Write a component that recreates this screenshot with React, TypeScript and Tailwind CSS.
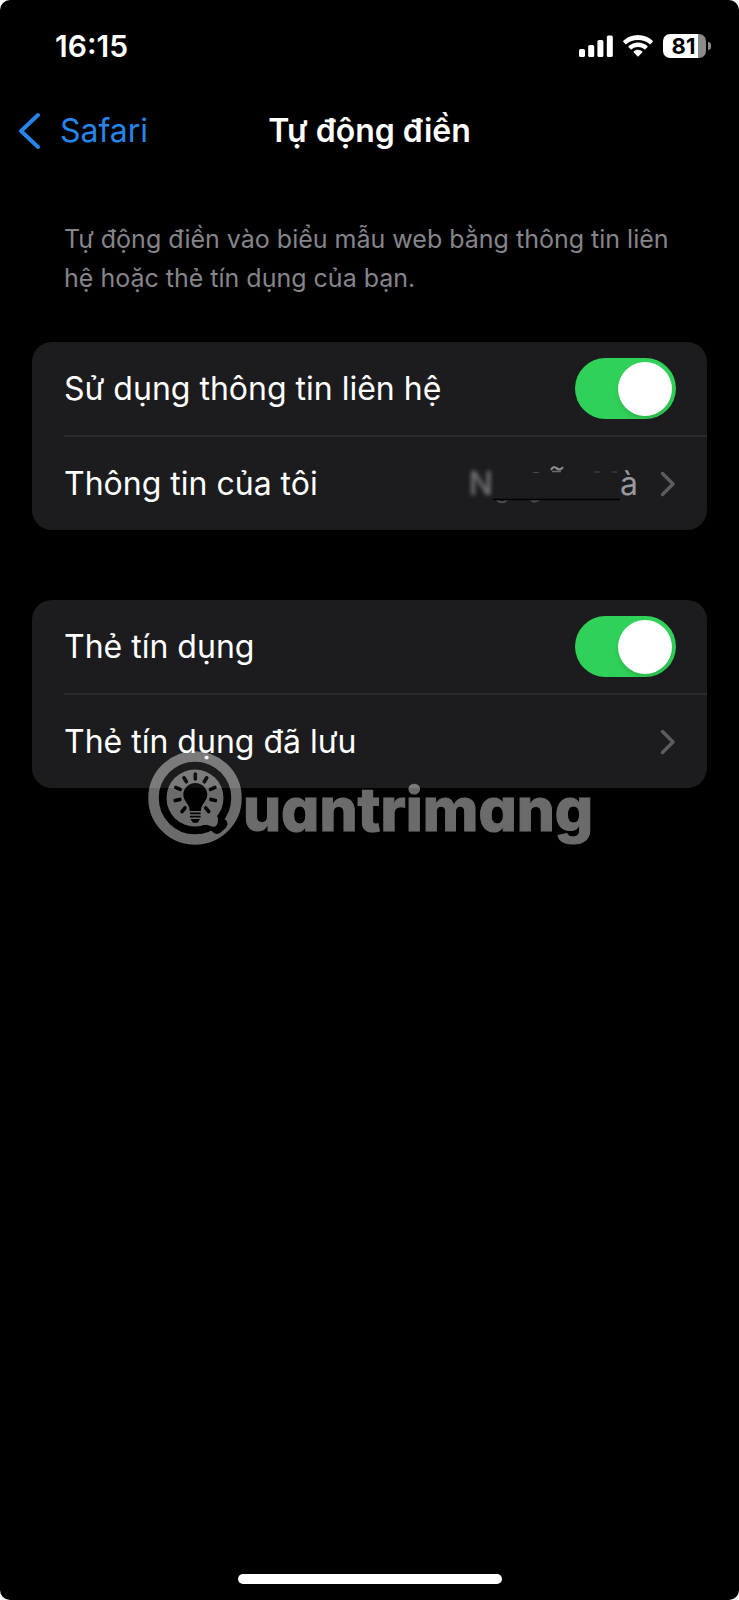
import { useState } from 'react';

interface ToggleRowProps {
    id: string;
    label: string;
    defaultOn?: boolean;
}

function ToggleRow({ id, label, defaultOn = true }: ToggleRowProps) {
    const [on, setOn] = useState(defaultOn);

    return (
        <div className="flex h-[93px] items-center justify-between pr-[31px]">
            <label htmlFor={id}>{label}</label>
            <input
                id={id}
                type="checkbox"
                role="switch"
                checked={on}
                onChange={(e) => setOn(e.target.checked)}
                className="flex h-[61px] w-[101px] shrink-0 cursor-pointer appearance-none items-center rounded-full bg-[#39393d] p-1 transition-colors before:size-[54px] before:rounded-full before:bg-white before:shadow-md before:content-[''] checked:justify-end checked:bg-[#30d158]"
            />
        </div>
    );
}

function Chevron() {
    return (
        <svg viewBox="0 0 16 26" className="h-[26px] w-4 shrink-0" fill="none" aria-hidden="true">
            <path d="M2.5 2.5 13 13 2.5 23.5" stroke="#5c5c60" strokeWidth="3.4" strokeLinecap="round" strokeLinejoin="round" />
        </svg>
    );
}

function StatusBar() {
    return (
        <header className="flex h-[92px] items-center justify-between pr-7 pl-[55px]">
            <time className="text-[30px] leading-9 font-semibold">16:15</time>
            <div className="flex items-center gap-[10px]">
                {/* Signal */}
                <svg viewBox="0 0 34 22" className="h-[22px] w-[34px]" fill="#fff" aria-hidden="true">
                    <rect x="0" y="14" width="6" height="8" rx="1.6" />
                    <rect x="9.2" y="10" width="6" height="12" rx="1.6" />
                    <rect x="18.4" y="5" width="6" height="17" rx="1.6" />
                    <rect x="27.8" y="0.5" width="6" height="21.5" rx="1.6" />
                </svg>
                {/* Wi-Fi */}
                <svg viewBox="0 0 30 22" className="h-[22px] w-[30px]" fill="#fff" aria-hidden="true">
                    <path d="M15 0C9.3 0 4.1 2.200.4 5.800a.8.8 0 0 0 0 1.100l2 2.100a.8.8 0 0 0 1.100 0C6.500 6 10.600 4.900 15 4.900S23.500 6 26.500 9a.8.8 0 0 0 1.100 0l2-2.100a.8.8 0 0 0 0-1.100C25.900 2.200 20.700 0 15 0Z" />
                    <path d="M15 7.400c-3.600 0-6.900 1.400-9.400 3.700a.8.8 0 0 0 0 1.100l2.100 2.100c.3.300.8.300 1.100 0 1.600-1.500 3.800-2.200 6.200-2.200s4.600.7 6.200 2.200c.3.300.8.300 1.100 0l2.100-2.100a.8.8 0 0 0 0-1.100A13.700 13.700 0 0 0 15 7.400Z" />
                    <path d="M15 14.700c-1.600 0-3.100.6-4.200 1.600a.8.8 0 0 0 0 1.100l3.600 3.900c.3.400.9.400 1.200 0l3.600-3.900a.8.8 0 0 0 0-1.100 6.200 6.200 0 0 0-4.200-1.600Z" />
                </svg>
                {/* Battery */}
                <div className="flex items-center gap-[2px]">
                    <div className="flex h-6 w-[43px] items-center justify-center overflow-hidden rounded-[7px] bg-linear-to-r from-white from-81% to-[#8b8b8b] to-81% pr-[2px] text-[22px] leading-6 font-bold text-black">
                        81
                    </div>
                    <div className="h-2 w-[3px] rounded-r-full bg-[#8b8b8b]" />
                </div>
            </div>
        </header>
    );
}

// Contact name with its middle part painted over
function RedactedName() {
    return (
        <span className="flex items-center text-[#98989f]">
            <span className="font-medium text-[#76767b] blur-[2px]">N</span>
            <svg viewBox="0 0 127 42" className="h-[42px] w-[127px]" fill="none" aria-hidden="true">
                <path d="M58 7c2-4 4-3 6-1.500s4 1.500 6-1.500" stroke="#8a8a8f" strokeWidth="2.200" />
                <path d="M59 8.500h9" stroke="#6b6b70" strokeWidth="1.500" />
                <path d="M40 9.500h6M101 9h6M119 9h5" stroke="#48484c" strokeWidth="1" />
                <path d="M4 37c3 3 7 3 10 0M38 37c2 2 5 2 8 0" stroke="#4b4b50" strokeWidth="2" />
                <path d="M0 36.500h127" stroke="#000" strokeWidth="1.500" />
            </svg>
            à
        </span>
    );
}

function Watermark() {
    return (
        <div className="pointer-events-none absolute bottom-0 left-[115px] flex translate-y-[58px] items-center opacity-42">
            <svg viewBox="0 0 96 96" className="size-24" aria-hidden="true">
                <circle cx="48" cy="48" r="41.500" fill="none" stroke="#fff" strokeWidth="10.500" />
                {/* Speech-bubble tail */}
                <path d="M63 72 70 78.500 75 74" fill="none" stroke="#000" strokeWidth="11" strokeLinecap="round" strokeLinejoin="round" />
                <circle cx="48" cy="48" r="28.500" fill="#fff" />
                <path d="M60 60 67.500 66c3.500 2 1.500 4 1.800 5.500s-1 4.500-4 3.500-5-2-10-2Z" fill="#fff" stroke="#fff" strokeWidth="3" strokeLinejoin="round" />
                {/* Bulb */}
                <path d="M48.300 33c-6.800 0-12 5.200-12 11.800 0 6.400 6.400 9.200 6.400 16.200h11.200c0-7 6.400-9.800 6.400-16.200 0-6.600-5.200-11.800-12-11.800Z" fill="#000" />
                <path d="M43 63.300h10.600M43 66.700h10.600" stroke="#000" strokeWidth="1.800" />
                <path d="M43.500 69h9.600l-2.600 3.700h-4.400Z" fill="#000" />
                <path
                    d="M48.300 24v5M37 27.800l2.400 4M59.700 27.800l-2.400 4M28.800 37.400l4.400 2M67.900 37.400l-4.400 2M28.200 50.600l4.600-1.200M68.500 50.600l-4.600-1.200M35 61.600l3-3.800M61.700 61.600l-3-3.800"
                    stroke="#000"
                    strokeWidth="3.600"
                    strokeLinecap="round"
                />
            </svg>
            <span className="pt-[22px] text-[60px] leading-[70px] font-extrabold [-webkit-text-stroke:1px_white] [font-feature-settings:'cv11']">
                uantrimang
            </span>
        </div>
    );
}

export default function App() {
    return (
        <div className="min-h-screen bg-white font-[Inter,'Liberation_Sans',sans-serif] text-[32px] leading-10 text-white">
            <div className="flex min-h-screen flex-col rounded-[10px] bg-black">
                <StatusBar />

                <nav className="grid h-[78px] grid-cols-[1fr_auto_1fr] items-center px-4">
                    <a href="#safari" className="flex items-center gap-5 text-[#2585ea]">
                        <svg viewBox="0 0 24 38" className="h-[38px] w-6" fill="none" aria-hidden="true">
                            <path d="M22 3 5 19l17 16" stroke="currentColor" strokeWidth="4" strokeLinecap="round" strokeLinejoin="round" />
                        </svg>
                        Safari
                    </a>
                    <h1 className="font-semibold">Tự động điền</h1>
                </nav>

                <main className="flex-1 px-8 pt-[50px]">
                    <p className="px-8 text-[25px] leading-[39px] text-[#85858a]">
                        Tự động điền vào biểu mẫu web bằng thông tin liên hệ hoặc thẻ tín dụng của bạn.
                    </p>

                    <section className="mt-11 rounded-[20px] bg-[#1c1c1e] pl-8">
                        <ToggleRow id="contact-info" label="Sử dụng thông tin liên hệ" />
                        <a href="#my-info" className="flex h-[95px] items-center justify-between border-t-2 border-[#2b2b2f] pr-[31px]">
                            Thông tin của tôi
                            <span className="flex items-center gap-[22px]">
                                <RedactedName />
                                <Chevron />
                            </span>
                        </a>
                    </section>

                    <section className="relative mt-[70px] rounded-[20px] bg-[#1c1c1e] pl-8">
                        <ToggleRow id="credit-cards" label="Thẻ tín dụng" />
                        <a href="#saved-cards" className="flex h-[95px] items-center justify-between border-t-2 border-[#2b2b2f] pr-[31px]">
                            Thẻ tín dụng đã lưu
                            <Chevron />
                        </a>
                        <Watermark />
                    </section>
                </main>

                <footer className="flex justify-center pb-4">
                    <div className="h-[10px] w-[264px] rounded-full bg-white" />
                </footer>
            </div>
        </div>
    );
}
